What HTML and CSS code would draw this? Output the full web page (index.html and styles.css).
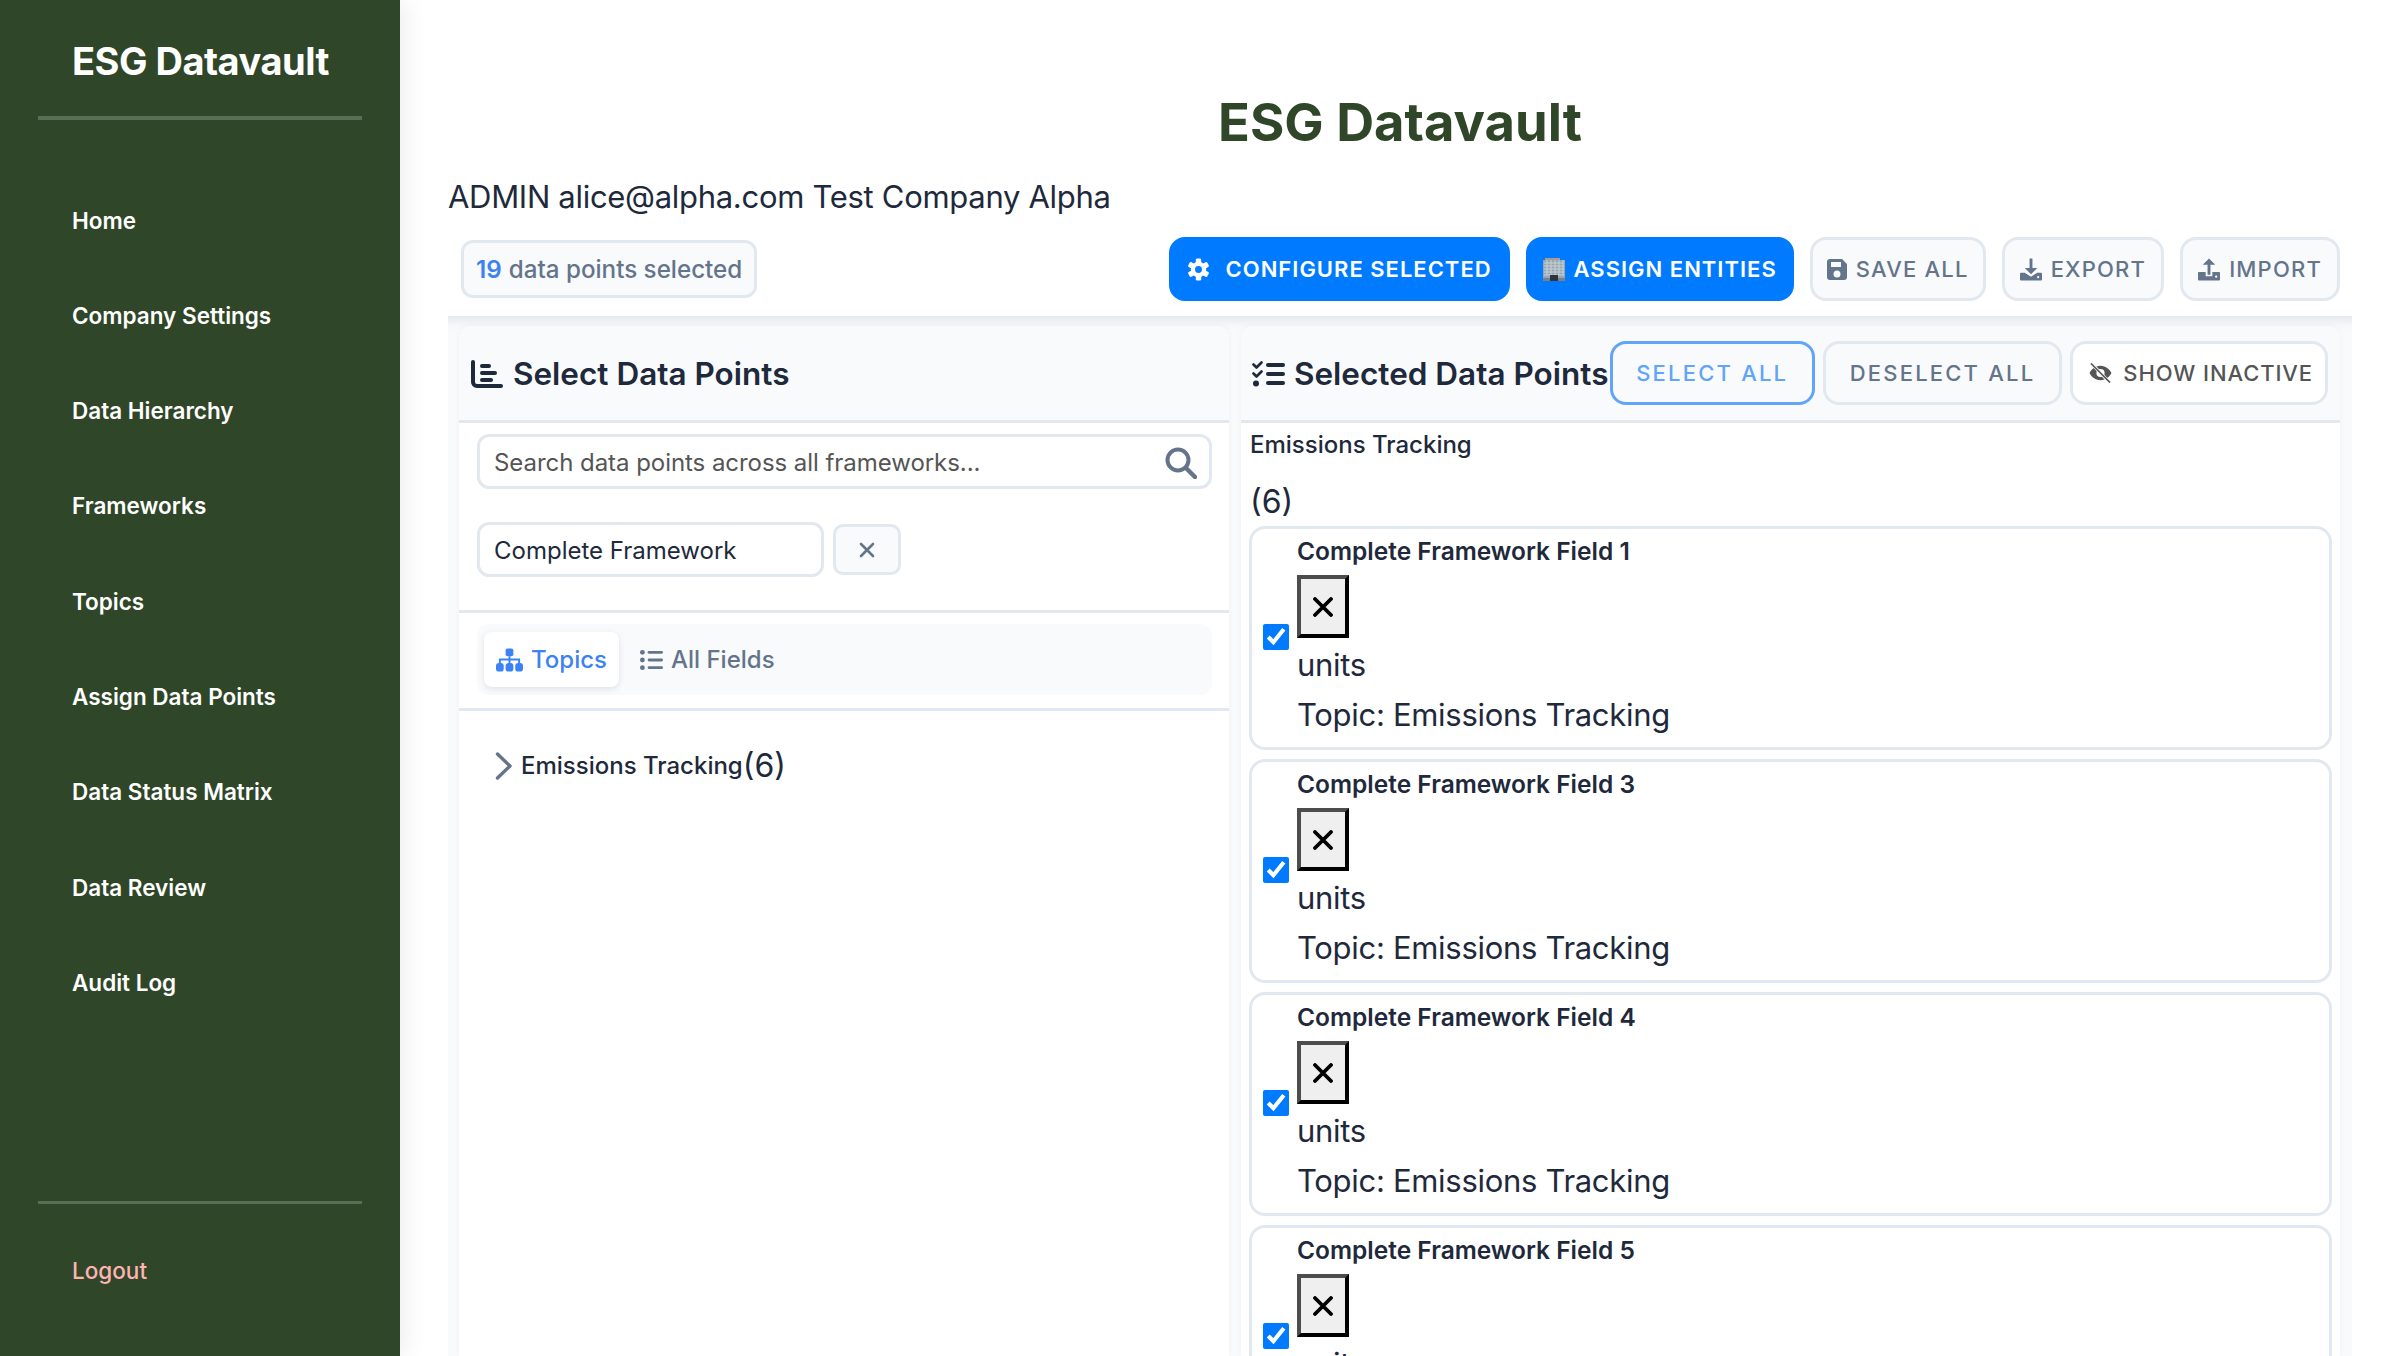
FILE: index.html
```html
<!DOCTYPE html>
<html>
  <head>
    <title>ESG Datavault</title>
    <link rel="stylesheet" href="styles.css">
  </head>
  <body>
    <aside class="sidebar">
      <div class="brand">ESG Datavault</div>
      <nav class="nav">
        <a href="#">Home</a>
        <a href="#">Company Settings</a>
        <a href="#">Data Hierarchy</a>
        <a href="#">Frameworks</a>
        <a href="#">Topics</a>
        <a href="#">Assign Data Points</a>
        <a href="#">Data Status Matrix</a>
        <a href="#">Data Review</a>
        <a href="#">Audit Log</a>
      </nav>
      <div class="sidebar-footer"><a href="#">Logout</a></div>
    </aside>

    <main class="main">
      <h1>ESG Datavault</h1>
      <p class="user-line">ADMIN alice@alpha.com Test Company Alpha</p>

      <div class="toolbar">
        <div class="count-badge"><b>19</b> data points selected</div>
        <div class="toolbar-actions">
          <button class="btn btn-primary btn-configure">
            <svg class="icon" width="23" height="23" viewBox="-12 -12 24 24">
              <g fill="#fff">
                <rect x="-2.8" y="-11.5" width="5.6" height="23" rx="1.4"/>
                <rect x="-2.8" y="-11.5" width="5.6" height="23" rx="1.4" transform="rotate(60)"/>
                <rect x="-2.8" y="-11.5" width="5.6" height="23" rx="1.4" transform="rotate(120)"/>
                <circle r="8"/>
              </g>
              <circle r="3.6" fill="#007bff"/>
            </svg>
            Configure Selected
          </button>
          <button class="btn btn-primary btn-assign">
            <svg class="icon" width="22" height="24" viewBox="0 0 22 24">
              <rect x="2" y="1" width="15" height="3" fill="#a89c94"/>
              <rect x="0" y="3" width="22" height="20" fill="#98a6b1"/>
              <path d="M1 6h20M1 9h20M1 12h20M1 15h20M1 18h20M4 3v15M8 3v15M12 3v15M16 3v15M20 3v15" stroke="#c4d2db" stroke-width="1"/>
              <rect x="0" y="21" width="22" height="3" fill="#7c8084"/>
              <rect x="7" y="18" width="8" height="6" fill="#2f353b"/>
            </svg>
            Assign Entities
          </button>
          <button class="btn btn-save">
            <svg class="icon" width="20" height="22" viewBox="0 0 20 22">
              <path fill="#64748b" fill-rule="evenodd" d="M3 1h12l5 5v13a3 3 0 0 1-3 3H3a3 3 0 0 1-3-3V4a3 3 0 0 1 3-3zm1 3v5h10V4zm6 8.500a3.500 3.500 0 1 0 0 7 3.500 3.500 0 0 0 0-7z"/>
            </svg>
            Save All
          </button>
          <button class="btn">
            <svg class="icon" width="22" height="23" viewBox="0 0 23 23">
              <path fill="#64748b" d="M10 0h3v10h5l-6.500 6.500L5 10h5zM1 15h4l6.500 4 6.500-4h4a1 1 0 0 1 1 1v6a1 1 0 0 1-1 1H1a1 1 0 0 1-1-1v-6a1 1 0 0 1 1-1z"/>
              <circle cx="19" cy="19.500" r="1.200" fill="#fff"/>
            </svg>
            Export
          </button>
          <button class="btn">
            <svg class="icon" width="22" height="23" viewBox="0 0 23 23">
              <path fill="#64748b" d="M11.500 0L18 6.500h-5V17h-3V6.500H5zM1 14h7v4.500h7V14h7a1 1 0 0 1 1 1v7a1 1 0 0 1-1 1H1a1 1 0 0 1-1-1v-7a1 1 0 0 1 1-1z"/>
              <circle cx="19" cy="19" r="1.200" fill="#fff"/>
            </svg>
            Import
          </button>
        </div>
      </div>

      <div class="workspace">
        <section class="panel panel-left">
          <header class="panel-header">
            <svg class="title-icon" width="32" height="28" viewBox="0 0 32 28">
              <path fill="#1e293b" d="M0 2a2 2 0 0 1 4 0v20a2 2 0 0 0 2 2h24a2 2 0 0 1 0 4H6a6 6 0 0 1-6-6z"/>
              <rect x="9" y="4" width="11" height="4" rx="2" fill="#1e293b"/>
              <rect x="9" y="11" width="17" height="4" rx="2" fill="#1e293b"/>
              <rect x="9" y="18" width="13" height="4" rx="2" fill="#1e293b"/>
            </svg>
            <h2>Select Data Points</h2>
          </header>

          <div class="filters">
            <div class="search-box">
              <span class="search-placeholder">Search data points across all frameworks...</span>
              <svg class="search-icon" width="32" height="32" viewBox="0 0 32 32">
                <circle cx="13" cy="13" r="10.500" fill="none" stroke="#64748b" stroke-width="4"/>
                <path d="M21 21l9 9" stroke="#64748b" stroke-width="4.500" stroke-linecap="round"/>
              </svg>
            </div>
            <div class="framework-row">
              <div class="framework-select">Complete Framework</div>
              <button class="clear-btn">
                <svg width="16" height="16" viewBox="0 0 16 16"><path d="M2 2l12 12M14 2L2 14" stroke="#64748b" stroke-width="2.600" stroke-linecap="round"/></svg>
              </button>
            </div>
          </div>

          <div class="tabs-wrap">
            <div class="tabs">
              <div class="tab tab-active">
                <svg class="icon" width="27" height="24" viewBox="0 0 28 24">
                  <g fill="#3b82f6">
                    <rect x="10" y="0" width="8" height="8" rx="2"/>
                    <rect x="0" y="15" width="8" height="9" rx="3"/>
                    <rect x="10" y="15" width="8" height="9" rx="3"/>
                    <rect x="20" y="15" width="8" height="9" rx="3"/>
                  </g>
                  <path d="M14 8v7M4 15v-3.500h20V15" fill="none" stroke="#3b82f6" stroke-width="2"/>
                </svg>
                Topics
              </div>
              <div class="tab">
                <svg class="icon" width="23" height="22" viewBox="0 0 24 22">
                  <g fill="#64748b">
                    <circle cx="2.500" cy="3" r="2.500"/><circle cx="2.500" cy="11" r="2.500"/><circle cx="2.500" cy="19" r="2.500"/>
                    <rect x="8" y="1.500" width="16" height="3" rx="1.500"/><rect x="8" y="9.500" width="16" height="3" rx="1.500"/><rect x="8" y="17.500" width="16" height="3" rx="1.500"/>
                  </g>
                </svg>
                All Fields
              </div>
            </div>
          </div>

          <div class="topic-row">
            <svg width="18" height="28" viewBox="0 0 18 28"><path d="M2.500 2L15 14 2.500 26" fill="none" stroke="#64748b" stroke-width="3.400" stroke-linecap="round" stroke-linejoin="round"/></svg>
            <span class="topic-name">Emissions Tracking</span><span class="topic-count">(6)</span>
          </div>
        </section>

        <section class="panel panel-right">
          <header class="panel-header">
            <div class="panel-title">
              <svg class="title-icon" width="33" height="26" viewBox="0 0 33 26">
                <path d="M1.500 3.500l3 3 5-5M1.500 12.500l3 3 5-5" fill="none" stroke="#1e293b" stroke-width="2.600" stroke-linecap="round" stroke-linejoin="round"/>
                <circle cx="4" cy="22.500" r="3" fill="#1e293b"/>
                <rect x="14" y="2" width="19" height="4" rx="2" fill="#1e293b"/>
                <rect x="14" y="11" width="19" height="4" rx="2" fill="#1e293b"/>
                <rect x="14" y="20" width="19" height="4" rx="2" fill="#1e293b"/>
              </svg>
              <h2>Selected Data Points</h2>
            </div>
            <div class="panel-actions">
              <button class="btn btn-select">Select All</button>
              <button class="btn btn-deselect">Deselect All</button>
              <button class="btn btn-inactive">
                <svg class="icon" width="25" height="20" viewBox="0 0 26 22">
                  <path fill="#555" fill-rule="evenodd" d="M13 3c6 0 10.500 4.500 12 8-1.500 3.500-6 8-12 8S2.500 14.500 1 11c1.500-3.500 6-8 12-8zm0 3.500a4.500 4.500 0 1 0 0 9 4.500 4.500 0 0 0 0-9z"/>
                  <path d="M3 0.500l20 21" stroke="#fff" stroke-width="3.500"/>
                  <path d="M2.500 0.500l21 21" stroke="#555" stroke-width="1.800"/>
                </svg>
                Show Inactive
              </button>
            </div>
          </header>

          <div class="selected-list">
            <div class="group-name">Emissions Tracking</div>
            <div class="group-count">(6)</div>

            <div class="field-card">
              <input type="checkbox" checked>
              <div class="field-info">
                <div class="field-name">Complete Framework Field 1</div>
                <div class="broken-icon"><svg width="20" height="20" viewBox="0 0 20 20"><path d="M2 2l16 16M18 2L2 18" stroke="#000" stroke-width="3.800" stroke-linecap="round"/></svg></div>
                <div class="field-line">units</div>
                <div class="field-line">Topic: Emissions Tracking</div>
              </div>
            </div>

            <div class="field-card">
              <input type="checkbox" checked>
              <div class="field-info">
                <div class="field-name">Complete Framework Field 3</div>
                <div class="broken-icon"><svg width="20" height="20" viewBox="0 0 20 20"><path d="M2 2l16 16M18 2L2 18" stroke="#000" stroke-width="3.800" stroke-linecap="round"/></svg></div>
                <div class="field-line">units</div>
                <div class="field-line">Topic: Emissions Tracking</div>
              </div>
            </div>

            <div class="field-card">
              <input type="checkbox" checked>
              <div class="field-info">
                <div class="field-name">Complete Framework Field 4</div>
                <div class="broken-icon"><svg width="20" height="20" viewBox="0 0 20 20"><path d="M2 2l16 16M18 2L2 18" stroke="#000" stroke-width="3.800" stroke-linecap="round"/></svg></div>
                <div class="field-line">units</div>
                <div class="field-line">Topic: Emissions Tracking</div>
              </div>
            </div>

            <div class="field-card">
              <input type="checkbox" checked>
              <div class="field-info">
                <div class="field-name">Complete Framework Field 5</div>
                <div class="broken-icon"><svg width="20" height="20" viewBox="0 0 20 20"><path d="M2 2l16 16M18 2L2 18" stroke="#000" stroke-width="3.800" stroke-linecap="round"/></svg></div>
                <div class="field-line">units</div>
                <div class="field-line">Topic: Emissions Tracking</div>
              </div>
            </div>
          </div>
        </section>
      </div>
    </main>
  </body>
</html>
```

FILE: styles.css
```css
* {
  box-sizing: border-box;
}

body {
  margin: 0;
  height: 100vh;
  display: flex;
  overflow: hidden;
  background-color: #fff;
  color: #1e293b;
  font-family: Inter, "Noto Sans", sans-serif;
}

a {
  text-decoration: none;
}

h1,
h2,
p {
  margin: 0;
}

button {
  font-family: inherit;
}

/* sidebar */
.sidebar {
  width: 400px;
  flex-shrink: 0;
  display: flex;
  flex-direction: column;
  background-color: #2f4628;
  box-shadow: 4px 0 24px rgba(0, 0, 0, 0.08);
}

.brand {
  margin: 0 38px;
  padding: 37px 34px 31px;
  border-bottom: 4px solid #5a6e54;
  color: #fff;
  font-size: 38px;
  font-weight: 700;
  line-height: 48px;
  letter-spacing: -0.5px;
  white-space: nowrap;
}

.nav {
  margin-top: 52.5px;
}

.nav a {
  display: block;
  padding: 34px 72px;
  color: #fff;
  font-size: 22.5px;
  font-weight: 600;
  line-height: 27.33px;
}

.sidebar-footer {
  margin: auto 38px 0;
  padding: 53px 34px 72px;
  border-top: 3px solid #5a6e54;
  font-size: 22.5px;
  font-weight: 500;
  line-height: 27px;
}

.sidebar-footer a {
  color: #ffb3b3;
}

/* main area */
.main {
  flex: 1;
  min-width: 0;
  display: flex;
  flex-direction: column;
  padding: 90px 48px 0;
}

h1 {
  color: #2f4628;
  font-size: 52.5px;
  font-weight: 700;
  line-height: 64px;
  text-align: center;
}

.user-line {
  margin-top: 19px;
  font-size: 31px;
  line-height: 48px;
  letter-spacing: -0.3px;
}

.toolbar {
  display: flex;
  align-items: center;
  justify-content: space-between;
  margin: 16px 12px 15px 13px;
}

.toolbar-actions {
  display: flex;
  gap: 16px;
}

.count-badge {
  height: 58px;
  padding: 0 12px;
  display: flex;
  align-items: center;
  gap: 7px;
  background-color: #f8fafc;
  border: 3px solid #e2e8f0;
  border-radius: 12px;
  color: #64748b;
  font-size: 24.2px;
  font-weight: 500;
}

.count-badge b {
  color: #3b82f6;
  font-weight: 600;
}

.btn {
  height: 64px;
  padding: 0 15px;
  display: flex;
  align-items: center;
  gap: 9px;
  background-color: #f8fafc;
  border: 3px solid #e2e8f0;
  border-radius: 16px;
  color: #64748b;
  font-size: 22px;
  font-weight: 500;
  letter-spacing: 1.2px;
  text-transform: uppercase;
  white-space: nowrap;
}

.btn-primary {
  background-color: #007bff;
  border-color: #007bff;
  color: #fff;
  font-weight: 600;
  letter-spacing: 1px;
}

.btn-configure {
  gap: 16px;
  padding: 0 15px;
}

.btn-assign {
  padding: 0 14px;
}

.btn-save {
  padding: 0 14px;
}

.icon {
  flex-shrink: 0;
}

/* panels */
.workspace {
  flex: 1;
  min-height: 0;
  display: grid;
  grid-template-columns: 770px 1fr;
  gap: 12px;
  padding: 10px 12px 0 11px;
  background: linear-gradient(#e4e9ef, #f3f5f8 8px, #f8fafc 14px);
}

.panel {
  min-width: 0;
  display: flex;
  flex-direction: column;
  overflow: hidden;
  background-color: #fff;
  border-radius: 12px 12px 0 0;
  box-shadow: 0 0 6px rgba(0, 0, 0, 0.04);
}

.panel-header {
  height: 97px;
  flex-shrink: 0;
  display: flex;
  align-items: center;
  padding: 2px 12px 0;
  background-color: #f8fafc;
  border-bottom: 3px solid #e2e8f0;
}

.panel-left .panel-header {
  gap: 10px;
}

.panel-right .panel-header {
  justify-content: space-between;
  padding-left: 11px;
}

.panel-title {
  display: flex;
  align-items: center;
  gap: 9px;
}

.panel-actions {
  display: flex;
  gap: 8px;
  margin-top: -2px;
}

h2 {
  font-size: 31.5px;
  font-weight: 600;
  line-height: 40px;
  white-space: nowrap;
}

.btn-select {
  padding: 0 23.5px;
  border-color: #60a5fa;
  color: #60a5fa;
  letter-spacing: 2.2px;
}

.btn-deselect {
  padding: 0 24px;
  letter-spacing: 2.2px;
}

.btn-inactive {
  padding: 0 12px 0 15px;
  background-color: #fff;
  color: #555;
  gap: 10px;
  letter-spacing: 0.9px;
}

/* left panel */
.filters {
  padding: 11px 17px 33px 18px;
  border-bottom: 3px solid #e2e8f0;
}

.search-box {
  height: 55px;
  display: flex;
  align-items: center;
  justify-content: space-between;
  padding: 2px 12px 0 14px;
  border: 3px solid #e2e8f0;
  border-radius: 12px;
  font-size: 24px;
}

.search-placeholder {
  color: #555;
  letter-spacing: -0.05px;
}

.framework-row {
  display: flex;
  align-items: center;
  gap: 9px;
  margin-top: 33px;
}

.framework-select {
  width: 347px;
  height: 55px;
  display: flex;
  align-items: center;
  padding: 2px 14px 0;
  border: 3px solid #e2e8f0;
  border-radius: 12px;
  font-size: 24px;
  color: #1e293b;
}

.clear-btn {
  width: 68px;
  height: 51px;
  display: flex;
  align-items: center;
  justify-content: center;
  padding: 0;
  background-color: #f8fafc;
  border: 3px solid #e2e8f0;
  border-radius: 10px;
}

.tabs-wrap {
  padding: 11px 17px 13px 18px;
  border-bottom: 3px solid #e2e8f0;
}

.tabs {
  height: 71px;
  display: flex;
  align-items: center;
  gap: 9px;
  padding: 0 7px;
  background-color: #f8fafc;
  border-radius: 12px;
}

.tab {
  height: 55px;
  display: flex;
  align-items: center;
  gap: 8px;
  padding: 0 12px;
  border-radius: 8px;
  color: #64748b;
  font-size: 24px;
  font-weight: 500;
}

.tab-active {
  background-color: #fff;
  box-shadow: 0 2px 6px rgba(0, 0, 0, 0.1);
  color: #3b82f6;
}

.topic-row {
  display: flex;
  align-items: center;
  padding: 35px 36px;
  color: #1e293b;
}

.topic-name {
  margin-left: 8px;
  font-size: 24px;
  font-weight: 500;
}

.topic-count {
  font-size: 32px;
}

/* selected fields */
.selected-list {
  padding: 7px 8px 0;
}

.group-name {
  padding-left: 1px;
  font-size: 24px;
  font-weight: 500;
  line-height: 30px;
}

.group-count {
  margin-top: 18px;
  padding-left: 1px;
  font-size: 32px;
  line-height: 48px;
}

.field-card {
  height: 224px;
  flex-shrink: 0;
  display: flex;
  align-items: center;
  gap: 8px;
  margin: 0 0 9px;
  padding: 7px 11px 7px;
  border: 3px solid #e2e8f0;
  border-radius: 16px;
}

.field-card input {
  width: 26px;
  height: 26px;
  margin: -2px 0 0;
  flex-shrink: 0;
  accent-color: #007bff;
}

.field-info {
  align-self: flex-start;
}

.field-name {
  font-size: 24.5px;
  font-weight: 600;
  line-height: 30px;
}

.broken-icon {
  width: 52px;
  height: 63px;
  margin: 9px 0 1px;
  display: flex;
  align-items: center;
  justify-content: center;
  background-color: #efefef;
  border: 4px solid;
  border-color: #4d4d4d #000 #000 #4d4d4d;
}

.field-line {
  font-size: 31px;
  line-height: 48px;
  letter-spacing: -0.3px;
  margin-top: 2.5px;
}
```
